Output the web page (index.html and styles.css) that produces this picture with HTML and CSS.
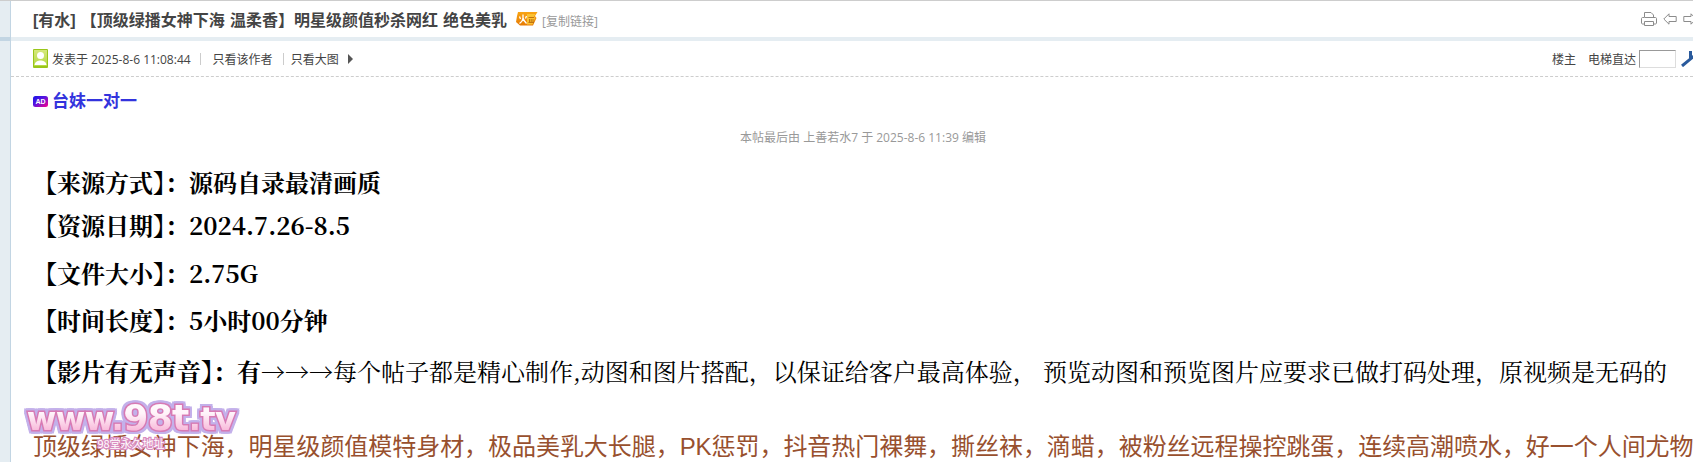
FILE: index.html
```html
<!DOCTYPE html>
<html lang="zh">
<head>
<meta charset="utf-8">
<title>帖子</title>
<link rel="stylesheet" href="styles.css">
</head>
<body>
<div class="page">
  <aside class="side">
    <div class="side-top"></div>
    <div class="side-band"></div>
    <div class="side-rest"></div>
  </aside>
  <main class="main">
    <header class="title-row">
      <h1 class="title">[有水] 【顶级绿播女神下海 温柔香】明星级颜值秒杀网红 绝色美乳</h1>
      <svg class="fire" width="23" height="15" viewBox="0 0 23 15">
        <defs><linearGradient id="fireg" x1="0" y1="0" x2="0" y2="1"><stop offset="0" stop-color="#f9a514"/><stop offset="1" stop-color="#e67a04"/></linearGradient></defs>
        <path d="M3 0H22.500L20 4L21.500 6L18 13.500H5L1 10L2 4Z" fill="url(#fireg)"/>
        <path d="M12 2H20.500L19 4.500L20 6L17.500 12.500H12Z" fill="#fbc232"/>
        <path d="M8 2.500V6C8 8 6.500 10 4.500 11.500M8 6C8.500 8.500 10 10 11.500 11.500M4.500 4.500L5.500 7M11.500 4L10.500 6.500" stroke="#fff" stroke-width="1.300" fill="none"/>
        <path d="M13.500 5.500H19M14.500 7V10M16.200 7V10M18 7V10M13.500 10.500H19" stroke="#b45f06" stroke-width=".8" fill="none"/>
      </svg>
      <a class="copy">[复制链接]</a>
      <div class="tools">
        <svg width="16" height="16" viewBox="0 0 16 16" fill="none" stroke="#8c8c8c" stroke-width="1"><path d="M3.500 6V1.500H10L12.500 4V6M3.500 6.500H1.500C1 6.500 .5 7 .5 7.500V12C.5 12.500 1 13 1.500 13H3.500M12.500 13H14.500C15 13 15.500 12.500 15.500 12V7.500C15.500 7 15 6.500 14.500 6.500H3.500M3.500 10.500H12.500V14.500H3.500Z"/></svg>
        <svg width="14" height="12" viewBox="0 0 14 12" fill="none" stroke="#8c8c8c" stroke-width="1"><path d="M6 .8L.8 6L6 11.200V8.500H13.200V3.500H6Z"/></svg>
        <svg width="14" height="12" viewBox="0 0 14 12" fill="none" stroke="#8c8c8c" stroke-width="1"><path d="M8 .8L13.200 6L8 11.200V8.500H.8V3.500H8Z"/></svg>
      </div>
    </header>
    <div class="band"></div>
    <div class="meta-row">
      <svg class="avatar" width="15" height="19" viewBox="0 0 15 19">
        <defs><linearGradient id="avg" x1="0" y1="0" x2="0" y2="1"><stop offset="0" stop-color="#d5e87c"/><stop offset="1" stop-color="#b5d944"/></linearGradient></defs>
        <rect width="15" height="19" rx="1" fill="#99c61a"/>
        <rect x="1" y="1" width="13" height="16" fill="url(#avg)"/>
        <circle cx="7.500" cy="6.500" r="3.500" fill="#fff"/>
        <path d="M1.500 16C2 12.500 5 11.500 7.500 11.500S13 12.500 13.500 16Z" fill="#fff"/>
      </svg>
      <span class="posted">发表于 2025-8-6 11:08:44</span>
      <span class="pipe first"></span>
      <a class="meta-link">只看该作者</a>
      <span class="pipe second"></span>
      <a class="meta-link">只看大图</a>
      <span class="arrow"></span>
      <div class="floor">
        <span class="floor-label">楼主</span>
        <span class="floor-label">电梯直达</span>
        <span class="floor-input"></span>
        <svg class="go" width="14" height="17" viewBox="0 0 14 17"><path d="M1 16L13 6M9.500 1V7.500H14" stroke="#2a5a9c" stroke-width="3" fill="none"/></svg>
      </div>
    </div>
    <div class="ad-row">
      <svg class="ad-icon" width="15" height="11" viewBox="0 0 15 11">
        <defs><linearGradient id="adg" x1="0" y1="0" x2="1" y2="1"><stop offset="0" stop-color="#1414e8"/><stop offset=".45" stop-color="#5a14e0"/><stop offset="1" stop-color="#ff0088"/></linearGradient></defs>
        <rect width="15" height="11" rx="2.500" fill="url(#adg)"/>
        <text x="7.500" y="8" text-anchor="middle" class="ad-text">AD</text>
      </svg>
      <a class="ad-link">台妹一对一</a>
    </div>
    <article class="post">
      <p class="edit-note">本帖最后由 上善若水7 于 2025-8-6 11:39 编辑</p>
      <p class="line l1"><b>【来源方式】：源码自录最清画质</b></p>
      <p class="line l2"><b>【资源日期】：2024.7.26-8.5</b></p>
      <p class="line l3"><b>【文件大小】：2.75G</b></p>
      <p class="line l4"><b>【时间长度】：5小时00分钟</b></p>
      <p class="line l5"><b>【影片有无声音】：有</b>→→→每个帖子都是精心制作,动图和图片搭配，以保证给客户最高体验， 预览动图和预览图片应要求已做打码处理，原视频是无码的</p>
      <p class="desc">顶级绿播女神下海，明星级颜值模特身材，极品美乳大长腿，PK惩罚，抖音热门裸舞，撕丝袜，滴蜡，被粉丝远程操控跳蛋，连续高潮喷水，好一个人间尤物</p>
      <div class="watermark">
        <svg class="wm-svg" width="220" height="70" viewBox="0 0 220 70">
          <defs><linearGradient id="wmg" x1="0" y1="0" x2="0" y2="1"><stop offset="0" stop-color="#ffffff"/><stop offset=".4" stop-color="#fff4fa"/><stop offset="1" stop-color="#f5a0cc"/></linearGradient></defs>
          <text class="wm-url" x="110" y="44" text-anchor="middle" fill="url(#wmg)">www.<tspan class="wm-big">98t</tspan>.tv</text>
          <text class="wm-sub" x="110" y="62" text-anchor="middle">98堂永久地址</text>
        </svg>
      </div>
    </article>
  </main>
</div>
</body>
</html>
```
FILE: styles.css
```css
* { box-sizing: border-box; }
html, body { margin: 0; padding: 0; height: 462px; overflow: hidden; background: #fff; }
body { font-family: "Open Sans", "Noto Sans CJK SC", sans-serif; color: #444; font-size: 12px; }
a { color: inherit; text-decoration: none; }
p, h1 { margin: 0; }

.page { display: flex; width: 1693px; height: 462px; border-top: 1px solid #cdcdcd; }

.side { width: 11px; flex: none; display: flex; flex-direction: column; background: #e5edf2; border-right: 1px solid #c2d5e3; }
.side-top { height: 36px; }
.side-band { height: 4px; margin-right: -1px; background: #c2d5e3; }
.side-rest { flex: 1; }

.main { flex: 1; min-width: 0; }

.title-row { height: 36px; padding-left: 22px; padding-top: 4px; display: flex; align-items: center; }
.title { font-family: "Liberation Sans", "Noto Sans CJK SC", sans-serif; font-size: 16px; font-weight: 700; color: #444; white-space: nowrap; line-height: 24px; word-spacing: .7px; }
.fire { margin-left: 8px; margin-top: -4px; flex: none; }
.copy { margin-left: 4px; color: #999; font-size: 12px; }
.tools { margin-left: auto; display: flex; align-items: center; gap: 6px; width: 52px; overflow: hidden; flex: none; margin-top: -4px; }
.tools svg { flex: none; }

.band { height: 4px; background: #e5edf2; }

.meta-row { height: 36px; padding-left: 22px; display: flex; align-items: center; border-bottom: 1px dashed #cdcdcd; color: #444; white-space: nowrap; }
.avatar { margin-right: 4px; flex: none; }
.posted { font-size: 12px; }
.pipe { width: 1px; height: 12px; background: #ccc; }
.pipe.first { margin: 0 12px 0 9px; }
.pipe.second { margin: 0 7px 0 10px; }
.arrow { margin-left: 9px; width: 0; height: 0; border-left: 5px solid #555; border-top: 5px solid transparent; border-bottom: 5px solid transparent; }
.floor { margin-left: auto; display: flex; align-items: center; flex: none; width: 141px; overflow: hidden; }
.floor-label { margin-right: 12px; }
.floor-label + .floor-label { margin-right: 3px; }
.floor-input { width: 37px; height: 18px; flex: none; border: 1px solid; border-color: #999 #ddd #ddd #999; margin-right: 5px; }
.go { flex: none; }

.ad-row { padding: 9px 0 0 22px; display: flex; align-items: center; height: 39px; }
.ad-icon { margin-right: 4px; flex: none; }
.ad-text { fill: #fff; font: 700 7px "Liberation Sans", sans-serif; }
.ad-link { font-size: 17px; font-weight: 700; color: #3333dd; line-height: 22px; }

.post { position: relative; padding: 0 0 0 22px; white-space: nowrap; color: #000; }
.edit-note { padding-top: 12px; height: 50px; line-height: 20px; text-align: center; color: #999; font-size: 12px; }
.line { font-family: "Noto Serif CJK SC", "Liberation Serif", "Noto Sans CJK SC", serif; font-size: 24px; line-height: 32px; }
.l2 { margin-top: 11px; }
.l3 { margin-top: 16px; }
.l4 { margin-top: 15px; }
.l5 { margin-top: 19px; }
.desc { margin-top: 44px; font-size: 24px; line-height: 32px; letter-spacing: -.05px; color: #98502e; font-family: "Liberation Sans", "Noto Sans CJK SC", sans-serif; }

.watermark { position: absolute; left: 10px; top: 270px; width: 220px; height: 70px; }
.wm-svg { display: block; overflow: visible; }
.wm-url { font: 700 32px "DejaVu Sans", sans-serif; letter-spacing: -.6px; stroke: #d77ab4; stroke-width: 3px; paint-order: stroke fill; filter: drop-shadow(2px 0 0 #c3b0ea) drop-shadow(-2px 0 0 #c3b0ea) drop-shadow(0 2px 0 #c3b0ea) drop-shadow(0 -2px 0 #c3b0ea); }
.wm-big { font-size: 36px; }
.wm-sub { font: 400 11px "Noto Sans CJK SC", sans-serif; fill: #ffffff; stroke: #d98cc0; stroke-width: 2.500px; paint-order: stroke fill; }
```
